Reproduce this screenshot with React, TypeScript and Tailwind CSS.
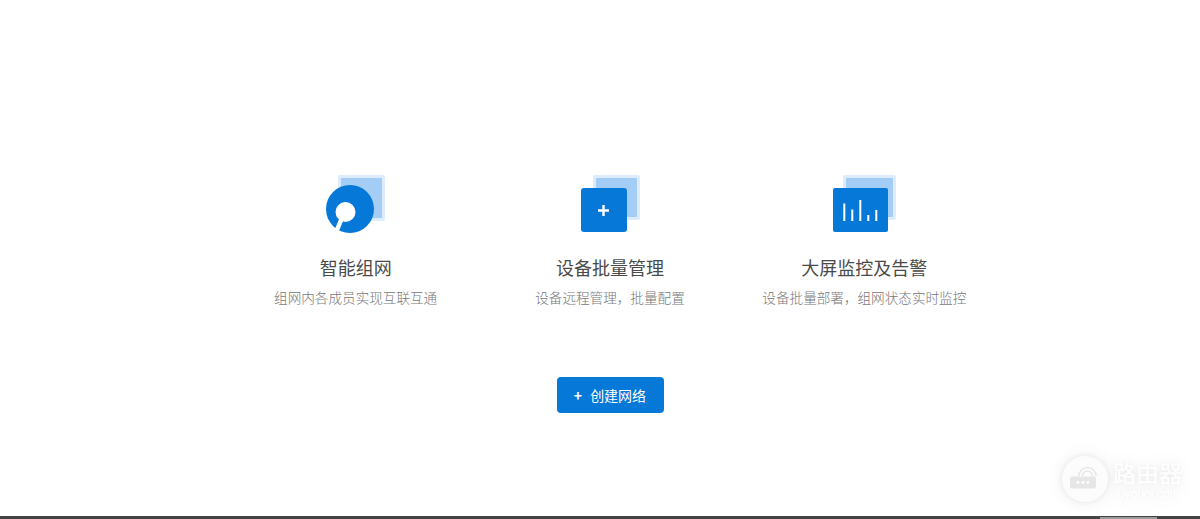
import React from 'react';

const FEATURES = [
  { key: 'mesh', title: '智能组网', desc: '组网内各成员实现互联互通' },
  { key: 'device', title: '设备批量管理', desc: '设备远程管理\uFF0C批量配置' },
  { key: 'screen', title: '大屏监控及告警', desc: '设备批量部署\uFF0C组网状态实时监控' },
];

function MeshIcon() {
  return (
    <svg width="60" height="58" viewBox="0 0 60 58" fill="none">
      <rect x="12" y="0" width="47" height="46" rx="2" fill="#dcecfc" />
      <rect x="15" y="3" width="41" height="40" fill="#a3cdf5" />
      <circle cx="24" cy="34" r="24" fill="#0678d8" />
      <circle cx="19.5" cy="37" r="10" fill="#fff" />
      <path d="M15.5 44 L11 55" stroke="#fff" strokeWidth="4.5" />
    </svg>
  );
}

function DeviceIcon() {
  return (
    <svg width="62" height="58" viewBox="-2 0 62 58" fill="none">
      <rect x="12" y="0" width="47" height="45" rx="2" fill="#dcecfc" />
      <rect x="15" y="3" width="41" height="39" fill="#a3cdf5" />
      <rect x="0" y="13" width="46" height="44" rx="3" fill="#0678d8" />
      <path d="M22.5 30v11M17 35.5h11" stroke="#fff" strokeWidth="2.4" />
    </svg>
  );
}

function ScreenIcon() {
  return (
    <svg width="66" height="58" viewBox="-2 0 66 58" fill="none">
      <rect x="10" y="0" width="53" height="45" rx="2" fill="#dcecfc" />
      <rect x="13" y="3" width="47" height="39" fill="#a3cdf5" />
      <rect x="0" y="13" width="55" height="44" rx="2" fill="#0678d8" />
      <path d="M11.3 28.5V46M19.3 34.5V46M27.3 25V46M35.3 40V46M43.3 35V46" stroke="#fff" strokeWidth="2" />
    </svg>
  );
}

const ICONS: Record<string, React.ReactNode> = {
  mesh: <MeshIcon />,
  device: <DeviceIcon />,
  screen: <ScreenIcon />,
};

function Watermark() {
  return (
    <div className="absolute right-[18px] bottom-[17px] flex items-center gap-[5px] [filter:drop-shadow(0_0_3px_rgba(0,0,0,0.07))_drop-shadow(0_0_8px_rgba(0,0,0,0.07))]">
      <div className="flex h-[46px] w-[46px] items-center justify-center rounded-full bg-[#fcfcfc]">
        <svg width="32" height="32" viewBox="0 0 32 32" fill="none">
          <path d="M10 13a8.5 8.5 0 0 1 17 0M13.5 13a5 5 0 0 1 10 0" stroke="#e6e6e6" strokeWidth="1.6" />
          <rect x="1" y="13.5" width="26" height="12" rx="2" fill="#e6e6e6" />
          <circle cx="9" cy="19.5" r="1.4" fill="#fff" />
          <circle cx="14" cy="19.5" r="1.4" fill="#fff" />
          <circle cx="19" cy="19.5" r="1.4" fill="#fff" />
        </svg>
      </div>
      <div className="flex flex-col items-center gap-[3px] text-white">
        <span className="text-[23px] leading-[26px]">路由器</span>
        <span className="text-[12px] leading-[12px] [font-family:'Liberation_Sans',sans-serif]">luyouqi.com</span>
      </div>
    </div>
  );
}

export default function App() {
  return (
    <div className="relative flex h-[519px] w-[1200px] flex-col overflow-hidden bg-white [font-family:'Noto_Sans_CJK_SC',sans-serif]">
      <main className="flex flex-1 flex-col items-center pt-[175px] pl-[20px]">
        <div className="grid w-[763px] grid-cols-3">
          {FEATURES.map((f) => (
            <div key={f.key} className="flex flex-col items-center">
              <div className="flex h-[58px] items-center justify-center">{ICONS[f.key]}</div>
              <h3 className="mt-[21px] text-[18px] leading-[26px] font-normal text-[#4a4a4a]">{f.title}</h3>
              <p className="mt-[7px] text-[13.6px] leading-[20px] font-light text-[#777]">{f.desc}</p>
            </div>
          ))}
        </div>
        <button className="mt-[70px] flex h-[36px] w-[107px] items-center justify-center gap-[8px] rounded-[4px] bg-[#0678d8] text-[14px] text-white">
          <span className="text-[14px] font-bold">+</span>
          <span>创建网络</span>
        </button>
      </main>
      <div className="flex h-[3px] items-end justify-end bg-[#444] pr-[43px]">
        <div className="h-[2px] w-[57px] bg-[#9a9a9a]" />
      </div>
      <Watermark />
    </div>
  );
}
